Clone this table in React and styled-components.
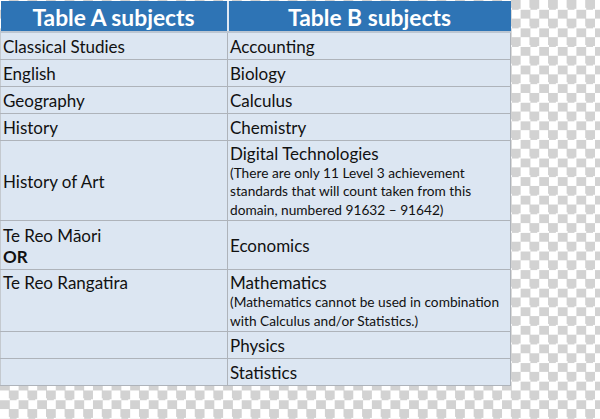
import React from "react";
import styled, { createGlobalStyle } from "styled-components";

const GlobalStyle = createGlobalStyle`
  html, body {
    margin: 0;
    padding: 0;
  }
  body {
    width: 600px;
    height: 419px;
    overflow: hidden;
    background: repeating-conic-gradient(#d2d2d2 0 25%, #ffffff 0 50%) 0 0 / 18.6px 18.6px;
    font-family: Lato, "Open Sans", sans-serif;
  }
`;

const Page = styled.div`
  width: 600px;
  height: 419px;
`;

const SubjectTable = styled.table`
  border-collapse: collapse;
  width: 510px;
  table-layout: fixed;
  margin-top: 1px;
`;

const HeadCell = styled.th`
  background: #2e74b5;
  color: #ffffff;
  font-weight: 700;
  font-size: 22.8px;
  height: 29px;
  padding: 1px 0 0;
  text-align: center;
  border-left: 2px solid #dfe8f3;
  border-bottom: 2px solid #bcc6d2;
  &:first-child {
    border-left: none;
  }
`;

const Row = styled.tr`
  height: ${(p) => p.$h}px;
`;

const Cell = styled.td`
  background: #dce6f2;
  color: #111111;
  font-size: 17px;
  line-height: 21px;
  padding: 2px 2px 0;
  vertical-align: ${(p) => (p.$top ? "top" : "middle")};
  border: 1px solid #aeb3ba;
  border-top-width: ${(p) => (p.$first ? 0 : 1)}px;
  &:first-child {
    border-left: 1px solid #c4c9cf;
  }
`;

const Note = styled.div`
  font-size: 13.7px;
  line-height: 18.5px;
`;

const Strong = styled.b`
  font-weight: 700;
`;

const rows = [
  { h: 27, a: "Classical Studies", b: "Accounting" },
  { h: 27, a: "English", b: "Biology" },
  { h: 27, a: "Geography", b: "Calculus" },
  { h: 27, a: "History", b: "Chemistry" },
  {
    h: 80,
    a: "History of Art",
    b: "Digital Technologies",
    note:
      "(There are only 11 Level 3 achievement standards that will count taken from this domain, numbered 91632 \u2013 91642)",
  },
  {
    h: 49,
    a: (
      <>
        Te Reo Māori
        <br />
        <Strong>OR</Strong>
      </>
    ),
    b: "Economics",
  },
  {
    h: 62,
    a: "Te Reo Rangatira",
    top: true,
    b: "Mathematics",
    note:
      "(Mathematics cannot be used in combination with Calculus and/or Statistics.)",
  },
  { h: 27, a: "", b: "Physics" },
  { h: 27, a: "", b: "Statistics" },
];

export default function App() {
  return (
    <Page>
      <GlobalStyle />
      <SubjectTable>
        <colgroup>
          <col style={{ width: 227 }} />
          <col style={{ width: 283 }} />
        </colgroup>
        <thead>
          <tr>
            <HeadCell>Table A subjects</HeadCell>
            <HeadCell>Table B subjects</HeadCell>
          </tr>
        </thead>
        <tbody>
          {rows.map((r, i) => (
            <Row key={i} $h={r.h}>
              <Cell $first={i === 0} $top={r.top}>
                {r.a}
              </Cell>
              <Cell $first={i === 0}>
                {r.b}
                {r.note && <Note>{r.note}</Note>}
              </Cell>
            </Row>
          ))}
        </tbody>
      </SubjectTable>
    </Page>
  );
}
